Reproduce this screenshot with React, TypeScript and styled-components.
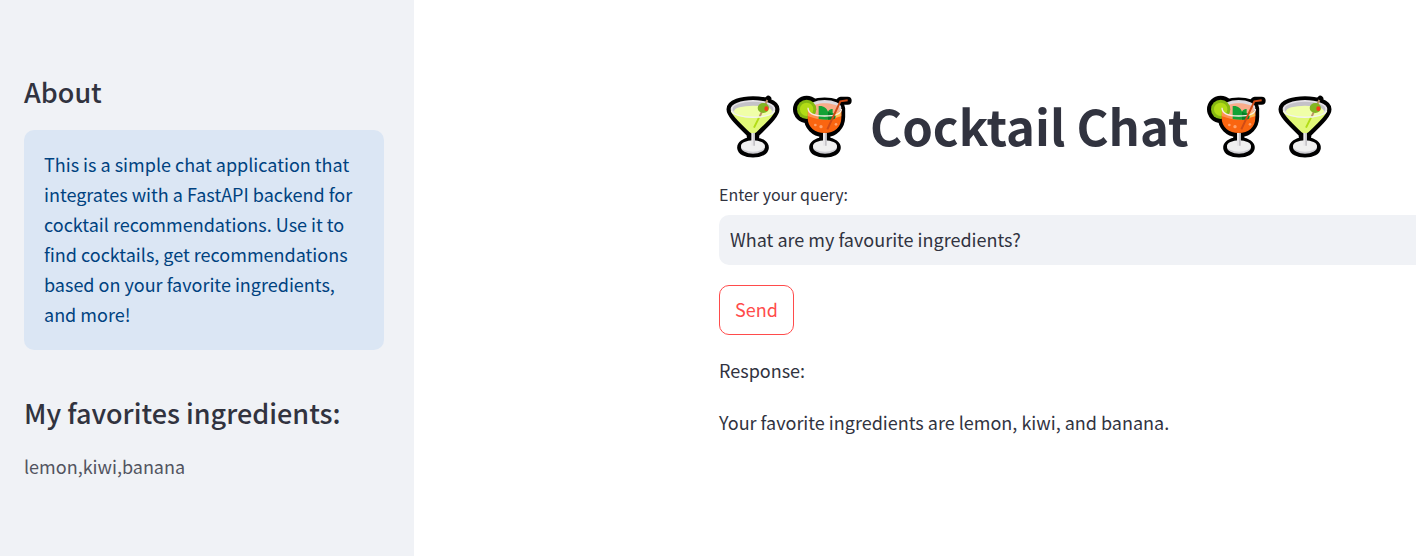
import React, { useState } from "react";
import styled, { createGlobalStyle } from "styled-components";

const GlobalStyle = createGlobalStyle`
  *, *::before, *::after { box-sizing: border-box; }
  body {
    margin: 0;
    background: #ffffff;
    color: #31333f;
    font-family: "Source Sans Pro", "Noto Sans CJK SC", sans-serif;
    font-size: 18px;
    line-height: 30px;
  }
`;

const Page = styled.div`
  display: flex;
  min-height: 100vh;
`;

const Sidebar = styled.aside`
  flex: 0 0 414px;
  padding: 74px 30px 72px 24px;
  background: #f0f2f6;
`;

const SectionTitle = styled.h2`
  margin: 0;
  font-size: 27px;
  font-weight: 500;
  line-height: 36px;
`;

const InfoBox = styled.div`
  margin: 20px 0 45px;
  padding: 19px 20px 21px;
  border-radius: 10px;
  background: #dbe6f4;
  color: #004280;
`;

const Favorites = styled.p`
  margin: 20px 0 0;
  color: #525460;
`;

const Main = styled.main`
  flex: 1;
  min-width: 0;
  padding: 85px 0 80px 305px;
`;

const Title = styled.h1`
  display: flex;
  align-items: center;
  gap: 13px;
  margin: 0;
  font-size: 49px;
  font-weight: 700;
  line-height: 80px;
  white-space: nowrap;
`;

const Glasses = styled.span`
  display: flex;
`;

const Glass = styled.svg`
  display: block;
  width: 69px;
  height: 80px;
`;

const QueryLabel = styled.label`
  display: block;
  margin-top: 16px;
  font-size: 16px;
  line-height: 26px;
`;

const QueryInput = styled.input`
  display: block;
  width: 100%;
  height: 50px;
  margin: 8px 0 20px;
  padding: 0 11px 2px;
  border: 0;
  border-radius: 10px 0 0 10px;
  outline: 0;
  background: #f0f2f6;
  color: #31333f;
  font: inherit;
`;

const SendButton = styled.button`
  display: block;
  height: 50px;
  margin-bottom: 20px;
  padding: 0 15px 2px;
  border: 1px solid #ff4b4b;
  border-radius: 10px;
  background: #ffffff;
  color: #ff4b4b;
  font: inherit;
  cursor: pointer;
`;

const Answer = styled.p`
  margin: 0 0 22px;
`;

function Martini() {
  const body =
    "M46 73 C46 36 182 36 182 73 C182 86 166 104 122 146 L120 168 C161 172 161 206 114 206 C67 206 67 172 108 168 L106 146 C62 104 46 86 46 73 Z";
  return (
    <Glass viewBox="12 0 207 240" aria-hidden="true">
      <path d={body} fill="#000" stroke="#000" strokeWidth="23" strokeLinejoin="round" />
      <path d="M145 58 L160 41" stroke="#000" strokeWidth="18" strokeLinecap="round" />
      <ellipse cx="114" cy="187" rx="36" ry="19" fill="#cecdd2" />
      <ellipse cx="114" cy="183" rx="36" ry="17" fill="#f0f0f0" />
      <path d="M47 74 C49 88 65 104 103 141 Q114 151 125 141 C163 104 179 88 181 74 Z" fill="#e1f878" />
      <ellipse cx="114" cy="72" rx="67" ry="27" fill="#e5e2e7" />
      <ellipse cx="114" cy="72" rx="61" ry="22" fill="#c4c2c8" />
      <ellipse cx="114" cy="79" rx="57" ry="17" fill="#f0ffa8" />
      <path d="M109 144 H120 V182 H109 Z" fill="#e8e7e9" />
      <path d="M115 144 H120 V182 H115 Z" fill="#c5c3c7" />
      <path d="M132 98 L117 128" stroke="#b2dc16" strokeWidth="6" />
      <path d="M157 45 L134 95" stroke="#bd9169" strokeWidth="6" />
      <ellipse cx="145" cy="69" rx="17" ry="15" fill="#83b522" />
      <ellipse cx="154" cy="71" rx="6" ry="7" fill="#f83b18" />
      <path d="M49 78 C60 103 168 103 179 78" fill="none" stroke="#f4f6e8" strokeWidth="4" />
    </Glass>
  );
}

function Mojito() {
  const body =
    "M83 70 C85 42 183 42 184 70 V96 C184 125 163 143 140 145 V168 C182 172 182 206 135 206 C88 206 88 172 129 168 V145 C103 143 83 125 83 96 Z";
  return (
    <Glass viewBox="24 0 207 240" aria-hidden="true">
      <path d={body} fill="#000" stroke="#000" strokeWidth="23" strokeLinejoin="round" />
      <circle cx="80" cy="73" r="41" />
      <path d="M170 62 L182 47 H203" fill="none" stroke="#000" strokeWidth="24" strokeLinecap="round" strokeLinejoin="round" />
      <ellipse cx="135" cy="187" rx="36" ry="19" fill="#cecdd2" />
      <ellipse cx="135" cy="183" rx="36" ry="17" fill="#f0f0f0" />
      <ellipse cx="134" cy="69" rx="50" ry="24" fill="#ddd9df" />
      <path d="M90 68 C104 50 164 50 179 68 V92 H90 Z" fill="#f9ac8a" />
      <circle cx="80" cy="73" r="29" fill="#86b912" />
      <circle cx="80" cy="73" r="20" fill="#b2dc16" />
      <path d="M84 68 C84 84 99 93 134 93 C169 93 184 84 184 68 V98 C184 127 163 144 134 144 C105 144 83 127 83 98 Z" fill="#fa6510" />
      <path d="M84 70 V94 Q134 114 184 94 V70 C184 84 169 93 134 93 C99 93 84 84 84 70 Z" fill="#ff9150" />
      <path d="M161 88 L182 78 V93 L161 100 Z" fill="#ffc04a" />
      <path d="M116 63 C130 61 141 70 144 80 C147 73 153 71 158 72 V84 C168 88 170 97 163 102 Q139 107 116 102 Z" fill="#12a235" />
      <path d="M144 80 V104 Q154 104 163 102 C169 95 162 87 152 84 Z" fill="#087c28" />
      <path d="M84 68 C84 84 99 93 134 93 C169 93 184 84 184 72" fill="none" stroke="#f9ece4" strokeWidth="4" />
      <path d="M142 133 L181 49 L203 46" fill="none" stroke="#cf4b16" strokeWidth="6" />
      <g fill="#ffa36b">
        <circle cx="123" cy="125" r="5" />
        <circle cx="106" cy="120" r="4" />
        <circle cx="168" cy="118" r="4" />
      </g>
      <path d="M129 144 H140 V182 H129 Z" fill="#e8e7e9" />
      <path d="M135 144 H140 V182 H135 Z" fill="#c5c3c7" />
    </Glass>
  );
}

export default function App() {
  const [query, setQuery] = useState("What are my favourite ingredients?");
  return (
    <>
      <GlobalStyle />
      <Page>
        <Sidebar>
          <SectionTitle>About</SectionTitle>
          <InfoBox>
            This is a simple chat application that integrates with a FastAPI backend for cocktail
            recommendations. Use it to find cocktails, get recommendations based on your favorite
            ingredients, and more!
          </InfoBox>
          <SectionTitle>My favorites ingredients:</SectionTitle>
          <Favorites>lemon,kiwi,banana</Favorites>
        </Sidebar>
        <Main>
          <Title>
            <Glasses>
              <Martini />
              <Mojito />
            </Glasses>
            Cocktail Chat
            <Glasses>
              <Mojito />
              <Martini />
            </Glasses>
          </Title>
          <QueryLabel htmlFor="query">Enter your query:</QueryLabel>
          <QueryInput
            id="query"
            type="text"
            value={query}
            onChange={(event) => setQuery(event.target.value)}
          />
          <SendButton type="button">Send</SendButton>
          <Answer>Response:</Answer>
          <Answer>Your favorite ingredients are lemon, kiwi, and banana.</Answer>
        </Main>
      </Page>
    </>
  );
}
